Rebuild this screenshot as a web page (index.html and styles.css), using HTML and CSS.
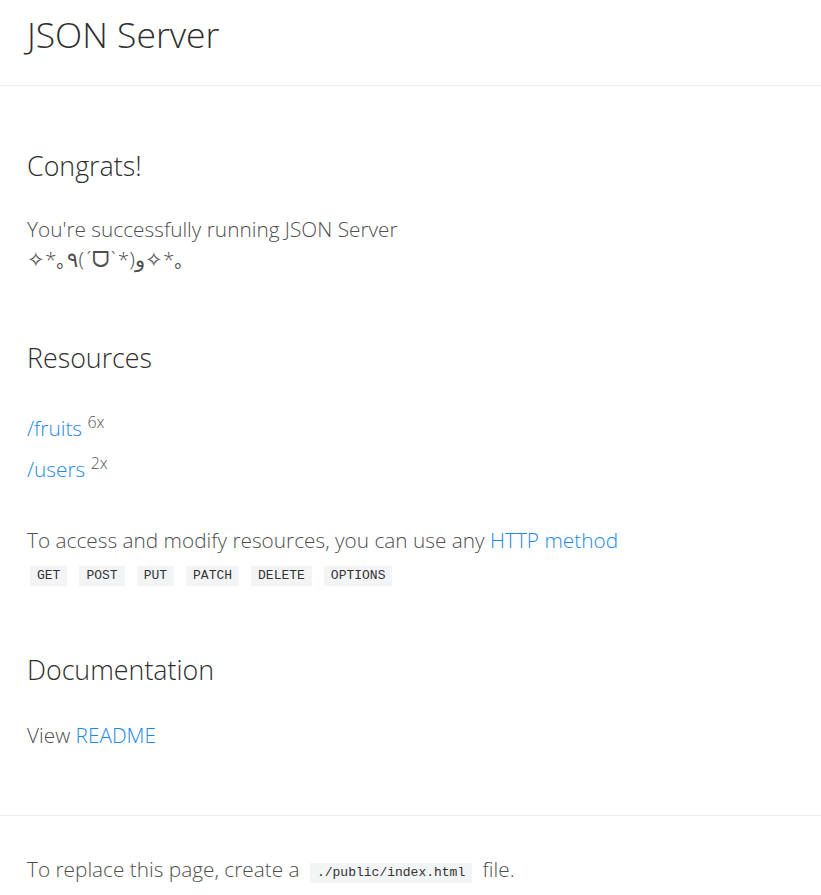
FILE: index.html
```html
<!DOCTYPE html>
<html lang="en">
<head>
<meta charset="utf-8">
<title>JSON Server</title>
<link rel="stylesheet" href="styles.css">
</head>
<body>
<header class="header">
  <div class="container">
    <div class="title">JSON Server</div>
  </div>
</header>
<main class="container main">
  <h2 class="heading">Congrats!</h2>
  <p class="text">You're successfully running JSON Server<br>✧*｡٩(ˊᗜˋ*)و✧*｡</p>

  <h2 class="heading">Resources</h2>
  <ul class="resources">
    <li><a class="link" href="#">/fruits</a> <sup class="count">6x</sup></li>
    <li><a class="link" href="#">/users</a> <sup class="count">2x</sup></li>
  </ul>
  <p class="text">To access and modify resources, you can use any <a class="link" href="#">HTTP method</a></p>
  <div class="methods">
    <code class="code">GET</code>
    <code class="code">POST</code>
    <code class="code">PUT</code>
    <code class="code">PATCH</code>
    <code class="code">DELETE</code>
    <code class="code">OPTIONS</code>
  </div>

  <h2 class="heading">Documentation</h2>
  <p class="text doc">View <a class="link" href="#">README</a></p>
</main>
<footer class="footer">
  <div class="container">
    <p class="text">To replace this page, create a <code class="code">./public/index.html</code> file.</p>
  </div>
</footer>
</body>
</html>
```

FILE: styles.css
```css
html, body {
  margin: 0;
  padding: 0;
  background: #fff;
}
body {
  font-family: "Open Sans", Lato, sans-serif;
  font-weight: 300;
  color: #4f4f4f;
}
.container {
  padding-left: 27px;
  padding-right: 27px;
}
.header {
  border-bottom: 1px solid #eeeeee;
}
.header .container {
  padding-top: 12px;
  padding-bottom: 28px;
}
.title {
  font-size: 35.5px;
  line-height: 45px;
  color: #2e2e2e;
}
.main {
  padding-top: 62px;
  padding-bottom: 65px;
}
.heading {
  font-size: 26.8px;
  font-weight: 300;
  line-height: 36px;
  margin: 0 0 32px;
  color: #2e2e2e;
}
.text {
  font-size: 20.8px;
  line-height: 30px;
  margin: 0;
}
.main .text + .heading,
.methods + .heading {
  margin-top: 66px;
}
.resources {
  list-style: none;
  margin: 0 0 35px;
  padding: 0;
}
.resources li {
  font-size: 20.8px;
  line-height: 41px;
}
.link {
  color: #1e88e5;
  text-decoration: none;
}
.count {
  font-size: 16px;
  line-height: 1;
  color: #555;
}
.methods {
  display: flex;
  gap: 12px;
  margin-top: 11px;
  padding-left: 3px;
}
.code {
  display: inline-block;
  font-family: "Liberation Mono", monospace;
  font-size: 13px;
  font-weight: 400;
  background: #f3f4f6;
  color: #333;
  padding: 2px 7px;
  line-height: 16px;
}
.main .heading + .text {
  margin-top: -2px;
}
.main .heading + .doc {
  margin-top: 0;
}
.footer {
  border-top: 1px solid #eeeeee;
}
.footer .container {
  padding-top: 38px;
  padding-bottom: 20px;
}
.footer .code {
  margin: 0 5px;
  vertical-align: 1px;
}
```
